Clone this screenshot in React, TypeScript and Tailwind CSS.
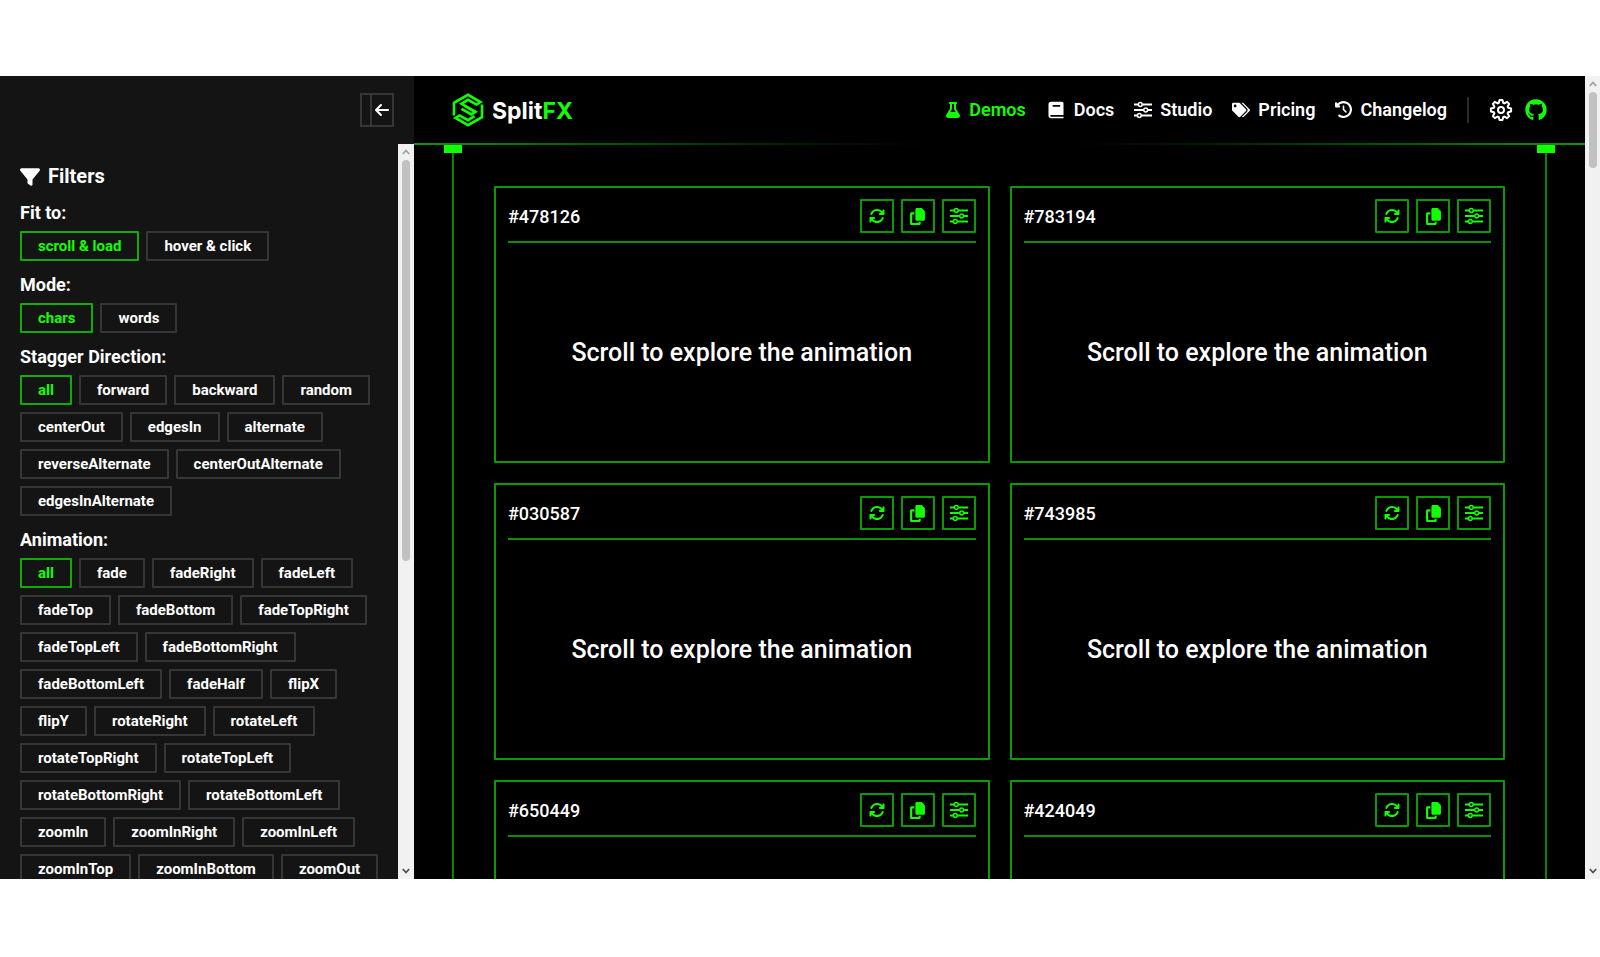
import React from "react";
import {
  FaFilter,
  FaFlask,
  FaClockRotateLeft,
  FaGithub,
  FaArrowsRotate,
  FaCopy,
  FaArrowLeft,
} from "react-icons/fa6";
import { FaTags } from "react-icons/fa";
import { BiSolidBook } from "react-icons/bi";

const filterGroups = [
  { title: "Fit to:", options: ["scroll & load", "hover & click"] },
  { title: "Mode:", options: ["chars", "words"] },
  {
    title: "Stagger Direction:",
    options: [
      "all",
      "forward",
      "backward",
      "random",
      "centerOut",
      "edgesIn",
      "alternate",
      "reverseAlternate",
      "centerOutAlternate",
      "edgesInAlternate",
    ],
  },
  {
    title: "Animation:",
    options: [
      "all",
      "fade",
      "fadeRight",
      "fadeLeft",
      "fadeTop",
      "fadeBottom",
      "fadeTopRight",
      "fadeTopLeft",
      "fadeBottomRight",
      "fadeBottomLeft",
      "fadeHalf",
      "flipX",
      "flipY",
      "rotateRight",
      "rotateLeft",
      "rotateTopRight",
      "rotateTopLeft",
      "rotateBottomRight",
      "rotateBottomLeft",
      "zoomIn",
      "zoomInRight",
      "zoomInLeft",
      "zoomInTop",
      "zoomInBottom",
      "zoomOut",
    ],
  },
];

const message = "Scroll to explore the animation";

const demos = [
  { id: "#478126", message },
  { id: "#783194", message },
  { id: "#030587", message },
  { id: "#743985", message },
  { id: "#650449" },
  { id: "#424049" },
];

const SlidersIcon = ({ className }: { className?: string }) => (
  <svg
    viewBox="0 0 18 18"
    fill="none"
    stroke="currentColor"
    strokeWidth="2"
    className={className}
    aria-hidden="true"
  >
    <path d="M0 3.5h4M8.5 3.5H18M0 9h9.500M14 9h4M0 14.500h3M7.500 14.500H18" />
    <circle cx="6.300" cy="3.500" r="1.900" strokeWidth="1.500" />
    <circle cx="11.700" cy="9" r="1.900" strokeWidth="1.500" />
    <circle cx="5.300" cy="14.500" r="1.900" strokeWidth="1.500" />
  </svg>
);

// eight teeth, four points each: two on the tip and two in the valley
const gearPoints = Array.from({ length: 8 }, (_, i) =>
  [
    [-8, 10.2],
    [8, 10.2],
    [18, 7.4],
    [27, 7.4],
  ].map(([offset, radius]) => {
    const angle = ((i * 45 + offset) * Math.PI) / 180;
    const x = 12 + radius * Math.sin(angle);
    const y = 12 - radius * Math.cos(angle);
    return `${x.toFixed(2)},${y.toFixed(2)}`;
  }),
)
  .flat()
  .join(" ");

const GearIcon = ({ className }: { className?: string }) => (
  <svg
    viewBox="0 0 24 24"
    fill="none"
    stroke="currentColor"
    strokeWidth="2"
    strokeLinejoin="round"
    className={className}
    aria-hidden="true"
  >
    <polygon points={gearPoints} />
    <circle cx="12" cy="12" r="3" />
  </svg>
);

const Logo = () => (
  <svg
    viewBox="0 0 32 34"
    fill="none"
    stroke="currentColor"
    strokeWidth="2.600"
    className="h-[34px] w-8 text-[#11ff00]"
    aria-hidden="true"
  >
    <path d="M2 22.500V9.800L16 1.800l12.500 7.200-4 2.600-8.500-4.800-6.500 4 14 8-4 2.600-10-5.600" />
    <path d="M30 11.500v12.700L16 32.200 3.500 25l4-2.600 8.500 4.800 6.500-4" />
    <path d="M12.500 12.600l10.500 6.200" />
  </svg>
);

const navItems = [
  { label: "Demos", icon: <FaFlask className="size-4" />, active: true },
  { label: "Docs", icon: <BiSolidBook className="size-5" /> },
  { label: "Studio", icon: <SlidersIcon className="size-[18px]" /> },
  { label: "Pricing", icon: <FaTags className="size-[18px]" /> },
  { label: "Changelog", icon: <FaClockRotateLeft className="size-[17px]" /> },
];

const Chevron = ({ down }: { down?: boolean }) => (
  <svg
    viewBox="0 0 8 6"
    fill="none"
    stroke={down ? "#505050" : "#a0a0a0"}
    strokeWidth="1.800"
    className="h-[6px] w-2"
  >
    <path d={down ? "M.8 1L4 4.500 7.200 1" : "M.8 5L4 1.500 7.200 5"} />
  </svg>
);

const ScrollTrack = ({ width, thumb }: { width: string; thumb: string }) => (
  <div className={`flex shrink-0 flex-col items-center bg-[#f1f1f1] ${width}`}>
    <div className="flex h-4 shrink-0 items-center">
      <Chevron />
    </div>
    <div className="flex min-h-0 w-2 flex-1 flex-col">
      <div className={`rounded-full bg-[#c1c1c1] ${thumb}`} />
    </div>
    <div className="flex h-4 shrink-0 items-center">
      <Chevron down />
    </div>
  </div>
);

const Sidebar = () => {
  const [selected, setSelected] = React.useState<Record<string, string>>({});
  return (
    <aside className="flex w-[414px] shrink-0 flex-col bg-[#141414]">
      <div className="flex h-[68px] shrink-0 items-center justify-end pr-5">
        <button
          aria-label="Collapse filters"
          className="flex size-[34px] border-2 border-[#363636]"
        >
          <span className="h-full w-[10px] border-r-2 border-[#363636]" />
          <span className="flex h-full flex-1 items-center justify-center">
            <FaArrowLeft className="size-4" />
          </span>
        </button>
      </div>
      <div className="flex min-h-0 flex-1">
        <div className="flex min-w-0 flex-1 flex-col gap-2 overflow-hidden pt-5 pr-4 pl-5">
          <h2 className="flex items-center gap-2 text-[20px] leading-[25px] font-bold">
            <FaFilter className="size-5" />
            Filters
          </h2>
          {filterGroups.map((group) => {
            const current = selected[group.title] ?? group.options[0];
            return (
              <section key={group.title}>
                <h3 className="pt-1 pb-[7px] text-[18px] leading-[23px] font-bold">
                  {group.title}
                </h3>
                <div className="flex flex-wrap gap-[7px]">
                  {group.options.map((option) => (
                    <button
                      key={option}
                      onClick={() =>
                        setSelected({ ...selected, [group.title]: option })
                      }
                      className={`h-[30px] rounded-[1px] border-2 px-4 text-[15px] leading-5 font-bold ${
                        option === current
                          ? "border-[#0eac04] text-[#11ff00]"
                          : "border-[#363636]"
                      }`}
                    >
                      {option}
                    </button>
                  ))}
                </div>
              </section>
            );
          })}
        </div>
        <ScrollTrack width="w-4" thumb="h-[57%]" />
      </div>
    </aside>
  );
};

const Header = () => (
  <header className="shrink-0">
    <div className="flex h-[67px] items-center justify-between px-[38px]">
      <a href="#home" className="flex items-center gap-2">
        <Logo />
        <span className="pt-[3px] font-['Inter','Open_Sans',sans-serif] text-[23px] font-bold">
          Split<span className="text-[#11ff00]">FX</span>
        </span>
      </a>
      <nav className="flex items-center gap-5">
        {navItems.map((item) => (
          <a
            key={item.label}
            href={`#${item.label.toLowerCase()}`}
            className={`flex items-center gap-2 text-[18px] font-semibold ${
              item.active ? "text-[#11ff00]" : ""
            }`}
          >
            {item.icon}
            {item.label}
          </a>
        ))}
        <span className="h-[26px] w-[2px] bg-[#2b2b2b]" />
        <div className="flex items-center gap-3">
          <button aria-label="Settings">
            <GearIcon className="size-6" />
          </button>
          <a href="#github" aria-label="GitHub" className="text-[#11ff00]">
            <FaGithub className="size-[22px]" />
          </a>
        </div>
      </nav>
    </div>
    <div className="h-[2px] bg-linear-to-r from-[#0c9a03] via-black to-[#0c9a03]" />
  </header>
);

const CardButton = ({
  label,
  children,
}: {
  label: string;
  children: React.ReactNode;
}) => (
  <button
    aria-label={label}
    className="flex size-[34px] items-center justify-center rounded-[1px] border-2 border-[#0c9a03] text-[#11ff00]"
  >
    {children}
  </button>
);

const DemoCard = ({ id, message }: { id: string; message?: string }) => (
  <article className="flex h-[277px] flex-col rounded-[1px] border-2 border-[#0c9a03] px-3 py-[11px]">
    <div className="flex items-center justify-between border-b-2 border-[#0c8f03] pb-2">
      <h3 className="pt-px text-[18px] font-medium">{id}</h3>
      <div className="flex gap-[7px]">
        <CardButton label="Replay">
          <FaArrowsRotate className="size-4" />
        </CardButton>
        <CardButton label="Copy">
          <FaCopy className="size-[17px]" />
        </CardButton>
        <CardButton label="Customize">
          <SlidersIcon className="size-[18px]" />
        </CardButton>
      </div>
    </div>
    <p className="flex flex-1 items-center justify-center pt-3 text-[25px] font-medium">
      {message}
    </p>
  </article>
);

export default function App() {
  return (
    <div className="h-screen overflow-hidden bg-white pt-[76px] pb-[78px] font-['Roboto',sans-serif] text-white">
      <div className="flex h-full bg-black">
        <Sidebar />
        <main className="flex min-w-0 flex-1 flex-col">
          <Header />
          <div className="flex min-h-0 flex-1 px-[30px]">
            <div className="flex w-[18px] shrink-0 flex-col items-center">
              <span className="h-2 w-full shrink-0 bg-[#11ff00]" />
              <span className="w-[2px] flex-1 bg-[#0c8503]" />
            </div>
            <div className="grid min-w-0 flex-1 grid-cols-2 content-start gap-5 overflow-hidden px-8 pt-[41px]">
              {demos.map((demo) => (
                <DemoCard key={demo.id} {...demo} />
              ))}
            </div>
            <div className="flex w-[18px] shrink-0 flex-col items-center">
              <span className="h-2 w-full shrink-0 bg-[#11ff00]" />
              <span className="w-[2px] flex-1 bg-[#0c8503]" />
            </div>
          </div>
        </main>
        <ScrollTrack width="w-[15px]" thumb="h-[76px]" />
      </div>
    </div>
  );
}
